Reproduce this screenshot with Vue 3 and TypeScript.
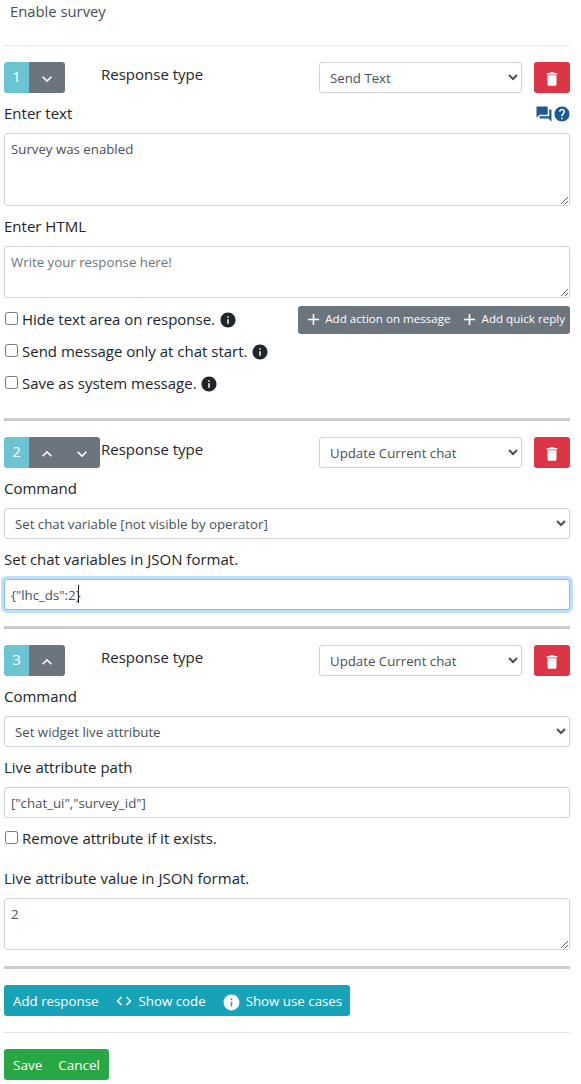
<script setup lang="ts">
import { onMounted, ref } from 'vue'

const icons = {
  add: 'M19 13h-6v6h-2v-6H5v-2h6V5h2v6h6v2z',
  up: 'M7.41 15.41L12 10.83l4.59 4.58L18 14l-6-6-6 6z',
  down: 'M7.41 8.59L12 13.17l4.59-4.58L18 10l-6 6-6-6z',
  trash: 'M6 19c0 1.1.9 2 2 2h8c1.1 0 2-.9 2-2V7H6v12zM19 4h-3.5l-1-1h-5l-1 1H5v2h14V4z',
  forum: 'M21 6h-2v9H6v2c0 .55.45 1 1 1h11l4 4V7c0-.55-.45-1-1-1zm-4 6V3c0-.55-.45-1-1-1H3c-.55 0-1 .45-1 1v14l4-4h10c.55 0 1-.45 1-1z',
  help: 'M12 2C6.48 2 2 6.48 2 12s4.48 10 10 10 10-4.48 10-10S17.52 2 12 2zm1 17h-2v-2h2v2zm2.07-7.75l-.9.92C13.45 12.9 13 13.5 13 15h-2v-.5c0-1.1.45-2.1 1.17-2.83l1.24-1.26c.37-.36.59-.86.59-1.41 0-1.1-.9-2-2-2s-2 .9-2 2H8c0-2.21 1.79-4 4-4s4 1.79 4 4c0 .88-.36 1.68-.93 2.25z',
  info: 'M12 2C6.48 2 2 6.48 2 12s4.48 10 10 10 10-4.48 10-10S17.52 2 12 2zm1 15h-2v-6h2v6zm0-8h-2V7h2v2z',
  code: 'M9.4 16.6L4.8 12l4.6-4.6L8 6l-6 6 6 6 1.4-1.4zm5.2 0l4.6-4.6-4.6-4.6L16 6l6 6-6 6-1.4-1.4z',
}

const variablesInput = ref<HTMLInputElement | null>(null)

onMounted(() => {
  variablesInput.value?.focus()
})
</script>

<template>
  <div class="page">
    <div class="title">Enable survey</div>
    <hr class="thin first" />

    <div class="head">
      <div class="order">
        <span class="num">1</span>
        <span class="arrow"><svg viewBox="0 0 24 24"><path :d="icons.down" /></svg></span>
      </div>
      <div class="type-label">Response type</div>
      <select class="field">
        <option>Send Text</option>
      </select>
      <button class="del"><svg viewBox="0 0 24 24"><path :d="icons.trash" /></svg></button>
    </div>

    <div class="label-row">
      <label>Enter text</label>
      <span class="tools">
        <svg viewBox="0 0 24 24"><path :d="icons.forum" /></svg>
        <svg viewBox="0 0 24 24"><path :d="icons.help" /></svg>
      </span>
    </div>
    <textarea class="field area-lg">Survey was enabled</textarea>

    <label class="block">Enter HTML</label>
    <textarea class="field area-sm" placeholder="Write your response here!"></textarea>

    <div class="options">
      <div class="checks">
        <label class="check">
          <input type="checkbox" />Hide text area on response.
          <svg class="tip" viewBox="0 0 24 24"><path :d="icons.info" /></svg>
        </label>
        <label class="check">
          <input type="checkbox" />Send message only at chat start.
          <svg class="tip" viewBox="0 0 24 24"><path :d="icons.info" /></svg>
        </label>
        <label class="check">
          <input type="checkbox" />Save as system message.
          <svg class="tip" viewBox="0 0 24 24"><path :d="icons.info" /></svg>
        </label>
      </div>
      <div class="msg-actions">
        <button><svg viewBox="0 0 24 24"><path :d="icons.add" /></svg>Add action on message</button>
        <button><svg viewBox="0 0 24 24"><path :d="icons.add" /></svg>Add quick reply</button>
      </div>
    </div>

    <hr class="thick" />

    <div class="head">
      <div class="order">
        <span class="num">2</span>
        <span class="arrow"><svg viewBox="0 0 24 24"><path :d="icons.up" /></svg></span>
        <span class="arrow"><svg viewBox="0 0 24 24"><path :d="icons.down" /></svg></span>
      </div>
      <div class="type-label">Response type</div>
      <select class="field">
        <option>Update Current chat</option>
      </select>
      <button class="del"><svg viewBox="0 0 24 24"><path :d="icons.trash" /></svg></button>
    </div>

    <label class="block">Command</label>
    <select class="field wide">
      <option>Set chat variable [not visible by operator]</option>
    </select>
    <label class="block">Set chat variables in JSON format.</label>
    <div class="caret-wrap">
      <input ref="variablesInput" class="field wide" type="text" value='{"lhc_ds":2}' />
      <span class="caret"></span>
    </div>

    <hr class="thick tight" />

    <div class="head">
      <div class="order">
        <span class="num">3</span>
        <span class="arrow"><svg viewBox="0 0 24 24"><path :d="icons.up" /></svg></span>
      </div>
      <div class="type-label">Response type</div>
      <select class="field">
        <option>Update Current chat</option>
      </select>
      <button class="del"><svg viewBox="0 0 24 24"><path :d="icons.trash" /></svg></button>
    </div>

    <label class="block">Command</label>
    <select class="field wide">
      <option>Set widget live attribute</option>
    </select>
    <label class="block">Live attribute path</label>
    <input class="field wide" type="text" value='["chat_ui","survey_id"]' />
    <label class="check single"><input type="checkbox" />Remove attribute if it exists.</label>
    <label class="block">Live attribute value in JSON format.</label>
    <textarea class="field area-sm">2</textarea>

    <hr class="thick tight" />

    <div class="btn-group info">
      <button>Add response</button>
      <button><svg viewBox="0 0 24 24"><path :d="icons.code" /></svg>Show code</button>
      <button><svg class="big" viewBox="0 0 24 24"><path :d="icons.info" /></svg>Show use cases</button>
    </div>

    <hr class="thin" />

    <div class="btn-group success">
      <button>Save</button>
      <button>Cancel</button>
    </div>
  </div>
</template>

<style scoped>
.page {
  box-sizing: border-box;
  width: 581px;
  height: 1084px;
  overflow: hidden;
  padding: 0 11px 0 4px;
  font-family: "Open Sans", "Noto Sans", sans-serif;
  font-size: 15px;
  line-height: 21px;
  color: #212529;
  background: #fff;
}
.title {
  padding: 1px 0 0 6px;
  font-size: 14.8px;
  color: #495057;
}
hr {
  border: 0;
  margin: 0;
}
.thin {
  height: 1px;
  background: rgba(0, 0, 0, 0.1);
  margin: 16px 0;
}
.first {
  margin-top: 23px;
}
.thick {
  height: 3px;
  background: #ccc;
  margin: 13px 0 16px;
}
.thick.tight {
  margin-top: 16px;
}
.head {
  display: grid;
  grid-template-columns: 97px 1fr 203px 48px;
  height: 31px;
}
.order {
  display: flex;
  width: max-content;
  height: 31px;
  border-radius: 3px;
  overflow: hidden;
}
.num {
  width: 25px;
  text-align: center;
  line-height: 29px;
  font-size: 15px;
  color: #fff;
  background: #6bc4d4;
}
.arrow {
  width: 35.5px;
  padding-top: 2px;
  box-sizing: border-box;
  background: #6c757d;
  display: flex;
  align-items: center;
  justify-content: center;
}
.arrow svg {
  width: 20px;
  height: 20px;
  fill: #fff;
}
.type-label {
  line-height: 24px;
}
.field {
  box-sizing: border-box;
  font-family: inherit;
  font-size: 13.25px;
  color: #495057;
  background: #fff;
  border: 1px solid #ced4da;
  border-radius: 3px;
  outline: 0;
}
select.field {
  height: 31px;
  padding: 0 6px;
}
.wide {
  display: block;
  width: 100%;
}
input.wide {
  height: 31px;
  padding: 0 6px;
}
input.wide:focus {
  border-color: #80bdff;
  box-shadow: 0 0 0 3px rgba(0, 123, 255, 0.25);
  caret-color: transparent;
}
.caret-wrap {
  position: relative;
}
.caret {
  position: absolute;
  left: 74px;
  top: 6px;
  width: 1px;
  height: 18px;
  background: #212529;
}
textarea.field {
  display: block;
  width: 100%;
  padding: 5px 6px;
  line-height: 20px;
}
textarea.field::placeholder {
  color: #6c757d;
}
.area-lg {
  height: 73px;
}
.area-sm {
  height: 52px;
}
.del {
  justify-self: end;
  width: 36px;
  height: 31px;
  padding: 3px 0 0;
  border: 0;
  border-radius: 3px;
  background: #dc3545;
  display: flex;
  align-items: center;
  justify-content: center;
}
.del svg {
  width: 18px;
  height: 18px;
  fill: #fff;
}
.label-row {
  display: flex;
  justify-content: space-between;
  align-items: center;
  margin-top: 10px;
  margin-bottom: 9px;
}
.tools {
  display: flex;
  margin-right: -1px;
}
.tools svg {
  width: 18px;
  height: 18px;
  fill: #1a5a96;
}
.block {
  display: block;
  margin-top: 10px;
  margin-bottom: 9px;
}
.check + .block {
  margin-top: 19px;
}
.options {
  display: flex;
  justify-content: space-between;
  align-items: flex-start;
  margin-top: 8px;
}
.checks {
  padding-top: 3px;
}
.check {
  display: flex;
  align-items: center;
  margin-bottom: 11px;
  white-space: pre;
}
.check input {
  width: 13px;
  height: 13px;
  margin: 0 4px 2px 1px;
}
.check.single {
  margin: 10px 0 0;
}
.tip {
  width: 18px;
  height: 18px;
  margin-left: 0;
  fill: #212529;
}
.msg-actions {
  display: flex;
  height: 28px;
  background: #6c757d;
  border-radius: 3px;
}
.msg-actions button {
  display: flex;
  align-items: center;
  padding: 0 4px 4px 5px;
  border: 0;
  background: none;
  color: #fff;
  font-family: inherit;
  font-size: 11.6px;
}
.msg-actions button:first-child {
  padding-left: 6px;
}
.msg-actions button:first-child svg {
  margin-right: 2px;
}
.msg-actions button:last-child {
  padding-right: 5px;
}
.msg-actions svg {
  width: 19px;
  height: 19px;
  margin-top: 2px;
  margin-right: 3px;
  fill: #fff;
}
.btn-group {
  display: inline-flex;
  height: 31px;
  border-radius: 3px;
  vertical-align: top;
}
.btn-group.info {
  background: #17a2b8;
}
.btn-group.success {
  background: #28a745;
}
.btn-group.success button {
  font-size: 13.5px;
}
.btn-group button {
  display: flex;
  align-items: center;
  padding: 0 8px;
  border: 0;
  background: none;
  color: #fff;
  font-family: inherit;
  font-size: 13.3px;
}
.btn-group button:first-child {
  padding-left: 9px;
}
.btn-group.info button:first-child {
  padding-right: 9px;
}
.btn-group.success button:last-child {
  padding-right: 9px;
}
.btn-group svg {
  width: 18px;
  height: 18px;
  margin-right: 5px;
  fill: #fff;
}
.btn-group svg.big {
  width: 19px;
  height: 19px;
  margin-top: 3px;
}
</style>
